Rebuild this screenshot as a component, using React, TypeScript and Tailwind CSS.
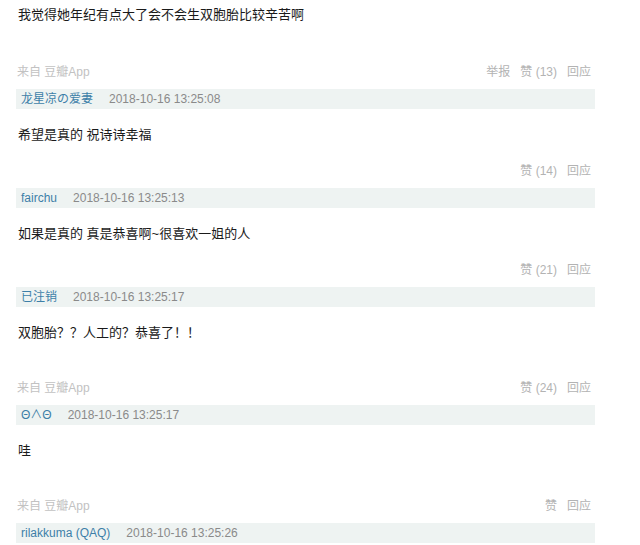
import React from "react";

type C = { name: string; date: string; text: string; from: boolean; likes: string; report?: boolean };

const items: C[] = [
  { name: "龙星凉の爱妻", date: "2018-10-16 13:25:08", text: "希望是真的 祝诗诗幸福", from: false, likes: "赞 (14)" },
  { name: "fairchu", date: "2018-10-16 13:25:13", text: "如果是真的 真是恭喜啊~很喜欢一姐的人", from: false, likes: "赞 (21)" },
  { name: "已注销", date: "2018-10-16 13:25:17", text: "双胞胎？？人工的？恭喜了！！", from: true, likes: "赞 (24)" },
  { name: "Θ∧Θ", date: "2018-10-16 13:25:17", text: "哇", from: true, likes: "赞" },
];

const font = { fontFamily: '"Liberation Sans", Arial, "Noto Sans CJK SC", sans-serif' };

function Footer({ from, likes, report, mt }: { from: boolean; likes: string; report?: boolean; mt: string }) {
  return (
    <div className={`flex h-4 items-center justify-between pl-[17px] pr-[49px] text-[12px] leading-4 ${mt}`}>
      <span className="text-[#c2c2c2]">{from ? "来自 豆瓣App" : ""}</span>
      <span className="flex gap-[10px] text-[#b3b3b3]">
        {report && <span>举报</span>}
        <span>{likes}</span>
        <span>回应</span>
      </span>
    </div>
  );
}

function Bar({ name, date }: { name: string; date: string }) {
  return (
    <div className="mt-[9px] ml-4 mr-[45px] flex h-5 items-center gap-4 bg-[#eef3f2] pl-[5px] text-[12px]">
      <span className="text-[#3d7fa8]">{name}</span>
      <span className="text-[#8a8a8a]">{date}</span>
    </div>
  );
}

export default function App() {
  return (
    <div className="h-[545px] w-[640px] overflow-hidden bg-white" style={font}>
      <div className="pl-[18px] pt-[5px] text-[13px] leading-5 text-[#1a1a1a]">我觉得她年纪有点大了会不会生双胞胎比较辛苦啊</div>
      <Footer from={true} likes="赞 (13)" report mt="mt-[39px]" />
      {items.map((c, i) => (
        <div key={i}>
          <Bar name={c.name} date={c.date} />
          <div className="mt-[16px] pl-[18px] text-[13px] leading-5 text-[#1a1a1a]">{c.text}</div>
          <Footer from={c.from} likes={c.likes} mt={c.from ? "mt-[37px]" : "mt-[18px]"} />
        </div>
      ))}
      <Bar name="rilakkuma (QAQ)" date="2018-10-16 13:25:26" />
    </div>
  );
}
